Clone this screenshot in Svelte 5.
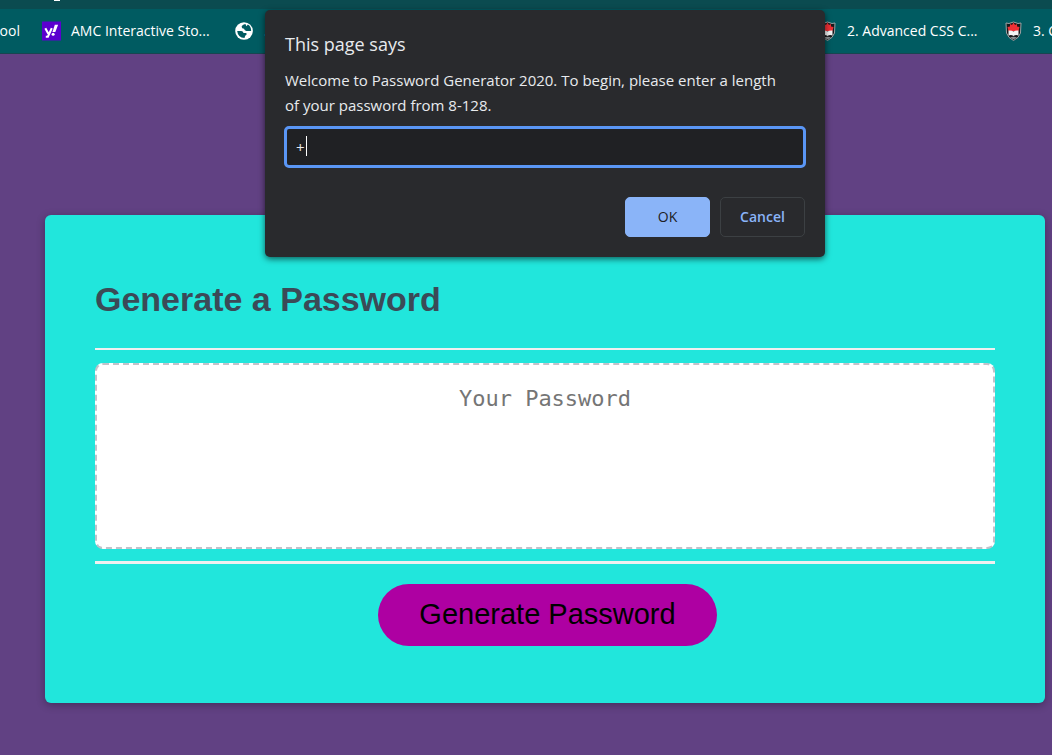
<script>
  let length = $state('+');
  let password = $state('');
  let open = $state(true);

  function focusEnd(node) {
    node.focus();
    node.setSelectionRange(node.value.length, node.value.length);
  }

  function submit(event) {
    event.preventDefault();
    open = false;
  }
</script>

{#snippet shield()}
  <svg class="icon" viewBox="0 0 19 20" aria-hidden="true">
    <path d="M2 2 L5 2.500 L9.500 1 L14 2.500 L17 2 L16.500 12 Q15 17 9.500 19.500 Q4 17 2.500 12 Z" fill="#17191b" stroke="#9da3a5" stroke-width="1" />
    <path d="M9.500 1.500 L11 4 L13 3 L13 5.500 L15.500 6 L14.500 10 H4.500 L3.500 6 L6 5.500 L6 3 L8 4 Z" fill="#ee3035" />
    <path d="M4.500 9.500 Q7.500 9 9.500 10.500 Q11.500 9 14.500 9.500 V14.500 Q11.500 13.500 9.500 15 Q7.500 13.500 4.500 14.500 Z" fill="#f3f4f4" />
    <path d="M6 16.500 Q9.500 15 13 16.500 L9.500 18.500 Z" fill="#8a8f91" />
  </svg>
{/snippet}

<header>
  <div class="tabs"><span></span></div>
  <nav aria-label="Bookmarks">
    <a class="first" href="#school">ool</a>
    <a class="amc" href="#amc">
      <svg class="icon" viewBox="0 0 20 20" aria-hidden="true">
        <rect width="20" height="20" fill="#5b00cf" />
        <path d="M3.500 7 L6.700 13 M10.300 7 L6.200 16 H4" fill="none" stroke="#fff" stroke-width="2.200" />
        <path d="M13.500 3.500 H17 L14 11 H11 Z" fill="#fff" />
        <circle cx="11.700" cy="13.500" r="1.600" fill="#fff" />
      </svg>
      <span>AMC Interactive Sto...</span>
    </a>
    <a class="wide" href="#site">
      <svg class="icon" viewBox="0 0 20 20" aria-hidden="true">
        <circle cx="9.500" cy="10" r="9.300" fill="#fff" />
        <path d="M11 2.500 Q7 3.500 7 5.500 Q7 7.500 9.500 7.500 Q10 9.500 12 10 H17 Q17 5 13.500 3.200 L12 5 Z" fill="#005b61" />
        <path d="M2.300 10 H6.500 Q8.500 10 9 12 H11.500 Q13 12.500 12 14 Q10.500 14.500 10 17.300 Q3 17 2.300 10 Z" fill="#005b61" />
      </svg>
      <span>.</span>
    </a>
    <a class="css" href="#css">{@render shield()}<span>2. Advanced CSS C...</span></a>
    <a class="last" href="#third">{@render shield()}<span>3. C</span></a>
  </nav>
</header>

<main>
  <section class="card">
    <h2>Generate a Password</h2>
    <div class="body">
      <textarea aria-label="Generated Password" placeholder="Your Password" readonly bind:value={password}></textarea>
    </div>
    <div class="footer">
      <button class="generate" onclick={() => (open = true)}>Generate Password</button>
    </div>
  </section>
</main>

{#if open}
  <form class="dialog" role="dialog" aria-labelledby="dialog-title" onsubmit={submit}>
    <h1 id="dialog-title">This page says</h1>
    <label for="length">Welcome to Password Generator 2020. To begin, please enter a length of your password from 8-128.</label>
    <div class="field">
      <input id="length" type="text" autocomplete="off" bind:value={length} use:focusEnd />
      <span class="caret"></span>
    </div>
    <div class="actions">
      <button class="ok" type="submit">OK</button>
      <button class="cancel" type="button" onclick={() => (open = false)}>Cancel</button>
    </div>
  </form>
{/if}

<style>
  :global(body) {
    margin: 0;
    background: #614183;
    font-family: "Liberation Sans", Arial, sans-serif;
    overflow: hidden;
  }

  * {
    box-sizing: border-box;
  }

  header {
    font: 14px "Open Sans", "Noto Sans", sans-serif;
  }

  .tabs {
    height: 9px;
    padding-left: 54px;
    background: #0b4b50;
  }

  .tabs span {
    display: block;
    width: 6px;
    height: 1px;
    background: #fff;
  }

  nav {
    display: flex;
    align-items: center;
    gap: 22px;
    height: 45px;
    padding-bottom: 1px;
    background: #005b61;
    border-bottom: 1px solid #174650;
    overflow: hidden;
  }

  nav a {
    display: flex;
    flex: none;
    align-items: center;
    gap: 10px;
    color: #fff;
    text-decoration: none;
    white-space: nowrap;
  }

  nav .first {
    width: 20px;
    justify-content: flex-end;
  }

  nav .amc {
    width: 171px;
  }

  nav .css {
    width: 164px;
  }

  nav .wide {
    flex: 1;
  }

  nav .last {
    width: 48px;
    overflow: hidden;
  }

  .icon {
    flex: none;
    width: 19px;
    height: 20px;
  }

  main {
    padding: 161px 7px 52px 45px;
  }

  .card {
    padding: 50px;
    background: #21e6dc;
    border-radius: 6px;
    box-shadow: 0 2px 8px rgba(0, 0, 0, 0.3);
  }

  h2 {
    margin: 0;
    padding: 13px 0 28px;
    color: #3b4a57;
    font-size: 34px;
    line-height: 42px;
  }

  .body {
    padding: 13px 0 12px;
    border-top: 2px solid #f0f0f0;
    border-bottom: 3px solid #f0f0f0;
  }

  textarea {
    display: block;
    width: 100%;
    height: 186px;
    padding: 20px;
    border: 2px dashed #c2c2ca;
    border-radius: 8px;
    background: #fff;
    color: #444;
    font: 22px/28px "DejaVu Sans Mono", monospace;
    text-align: center;
    resize: none;
  }

  textarea::placeholder {
    color: #757575;
  }

  .footer {
    display: flex;
    justify-content: center;
    padding: 20px 0 7px 5px;
  }

  .generate {
    height: 62px;
    padding: 0 41px 2px;
    border: 0;
    border-radius: 31px;
    background: #ae00a2;
    color: #000;
    font: 29px "Liberation Sans", Arial, sans-serif;
  }

  .dialog {
    position: absolute;
    top: 10px;
    left: calc(50% + 19px);
    width: 560px;
    padding: 20px;
    transform: translateX(-50%);
    border-radius: 5px;
    background: #292a2d;
    box-shadow: 0 2px 6px rgba(0, 0, 0, 0.6);
    color: #e8eaed;
    font: 15px/25px "Open Sans", "Noto Sans", sans-serif;
  }

  h1 {
    margin: 0 0 10px;
    font-size: 18px;
    font-weight: 400;
    line-height: 28px;
  }

  label {
    display: block;
    margin-bottom: 8px;
    padding-right: 20px;
  }

  .field {
    position: relative;
    margin: 0 -1px;
  }

  input {
    display: block;
    width: 100%;
    height: 42px;
    padding: 0 9px;
    border: 3px solid #5a96f5;
    border-radius: 5px;
    outline: 0;
    background: #202124;
    color: #e8eaed;
    caret-color: transparent;
    font: inherit;
  }

  .caret {
    position: absolute;
    top: 10px;
    left: 22px;
    width: 1px;
    height: 20px;
    background: #fff;
  }

  .actions {
    display: flex;
    justify-content: flex-end;
    gap: 10px;
    padding-top: 29px;
  }

  .actions button {
    width: 85px;
    height: 40px;
    padding: 0 0 2px;
    border: 1px solid #3c4043;
    border-radius: 5px;
    background: transparent;
    color: #8ab4f8;
    font: 600 14px "Open Sans", "Noto Sans", sans-serif;
  }

  .actions .ok {
    border-color: #8ab4f8;
    background: #8ab4f8;
    color: #202124;
    font-weight: 500;
  }
</style>
